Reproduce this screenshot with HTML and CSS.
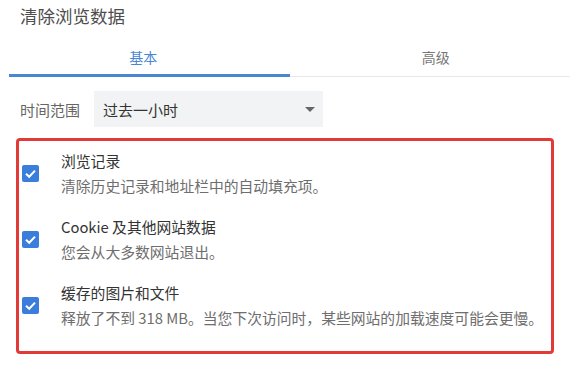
FILE: index.html
```html
<!DOCTYPE html>
<html lang="zh-CN">
<head>
    <meta charset="UTF-8">
    <meta name="viewport" content="width=device-width, initial-scale=1.0">
    <title>清除浏览数据</title>
    <link rel="stylesheet" href="styles.css">
</head>
<body>
    <div class="dialog">
        <div class="dialog-title">清除浏览数据</div>

        <div class="tabs">
            <div class="tab active">基本</div>
            <div class="tab">高级</div>
        </div>

        <div class="range-row">
            <label>时间范围</label>
            <div class="select">
                <span>过去一小时</span>
                <span class="arrow"></span>
            </div>
        </div>

        <div class="options">
            <div class="option">
                <div class="checkbox">
                    <svg width="17" height="17" viewBox="0 0 17 17"><polyline points="4,8.8 7.2,11.8 13,5.6" fill="none" stroke="#fff" stroke-width="2"/></svg>
                </div>
                <div class="option-text">
                    <div class="option-label">浏览记录</div>
                    <div class="option-desc">清除历史记录和地址栏中的自动填充项。</div>
                </div>
            </div>
            <div class="option">
                <div class="checkbox">
                    <svg width="17" height="17" viewBox="0 0 17 17"><polyline points="4,8.8 7.2,11.8 13,5.6" fill="none" stroke="#fff" stroke-width="2"/></svg>
                </div>
                <div class="option-text">
                    <div class="option-label">Cookie 及其他网站数据</div>
                    <div class="option-desc">您会从大多数网站退出。</div>
                </div>
            </div>
            <div class="option">
                <div class="checkbox">
                    <svg width="17" height="17" viewBox="0 0 17 17"><polyline points="4,8.8 7.2,11.8 13,5.6" fill="none" stroke="#fff" stroke-width="2"/></svg>
                </div>
                <div class="option-text">
                    <div class="option-label">缓存的图片和文件</div>
                    <div class="option-desc">释放了不到 318 MB。当您下次访问时，某些网站的加载速度可能会更慢。</div>
                </div>
            </div>
        </div>
    </div>
</body>
</html>
```

FILE: styles.css
```css
body {
    margin: 0;
    padding: 0;
    background-color: #fff;
    font-family: "Noto Sans CJK SC", "Noto Sans", sans-serif;
    color: #333;
}

.dialog {
    width: 570px;
}

.dialog-title {
    padding-left: 20px;
    height: 31px;
    line-height: 31px;
    font-size: 17.5px;
    color: #4d4d4d;
}

.tabs {
    display: flex;
    margin-left: 9px;
    margin-top: -1px;
    border-bottom: 1px solid #e8e8e8;
}

.tab {
    width: 282px;
    box-sizing: border-box;
    padding: 17px 0 9px 12px;
    line-height: 20px;
    text-align: center;
    font-size: 14px;
    color: #777;
}

.tab.active {
    padding: 17px 12px 7px 0;
    color: #4a86d4;
    border-bottom: 3px solid #4a86d4;
    margin-bottom: -1px;
}

.range-row {
    display: flex;
    align-items: center;
    margin-top: 14px;
    padding-left: 20px;
}

.range-row label {
    width: 74px;
    font-size: 15px;
    color: #666;
}

.select {
    display: flex;
    align-items: center;
    justify-content: space-between;
    width: 229px;
    height: 36px;
    box-sizing: border-box;
    padding: 0 8px 0 9px;
    background-color: #f2f3f4;
    font-size: 15px;
    color: #333;
}

.arrow {
    width: 0;
    height: 0;
    border-left: 5px solid transparent;
    border-right: 5px solid transparent;
    border-top: 5px solid #666;
}

.options {
    display: flex;
    flex-direction: column;
    gap: 16px;
    width: 538px;
    height: 216px;
    box-sizing: border-box;
    margin: 11px 0 0 16px;
    padding: 7px 0 0 3px;
    border: 3px solid #e23a36;
    border-radius: 4px;
}

.option {
    display: flex;
    align-items: center;
    gap: 22px;
}

.checkbox {
    width: 17px;
    height: 17px;
    border-radius: 2px;
    background-color: #3b7ddb;
}

.checkbox svg {
    display: block;
}

.option-label {
    font-size: 14.8px;
    line-height: 25px;
    color: #333;
}

.option-desc {
    font-size: 14.8px;
    line-height: 25px;
    color: #6e6e6e;
}
```
